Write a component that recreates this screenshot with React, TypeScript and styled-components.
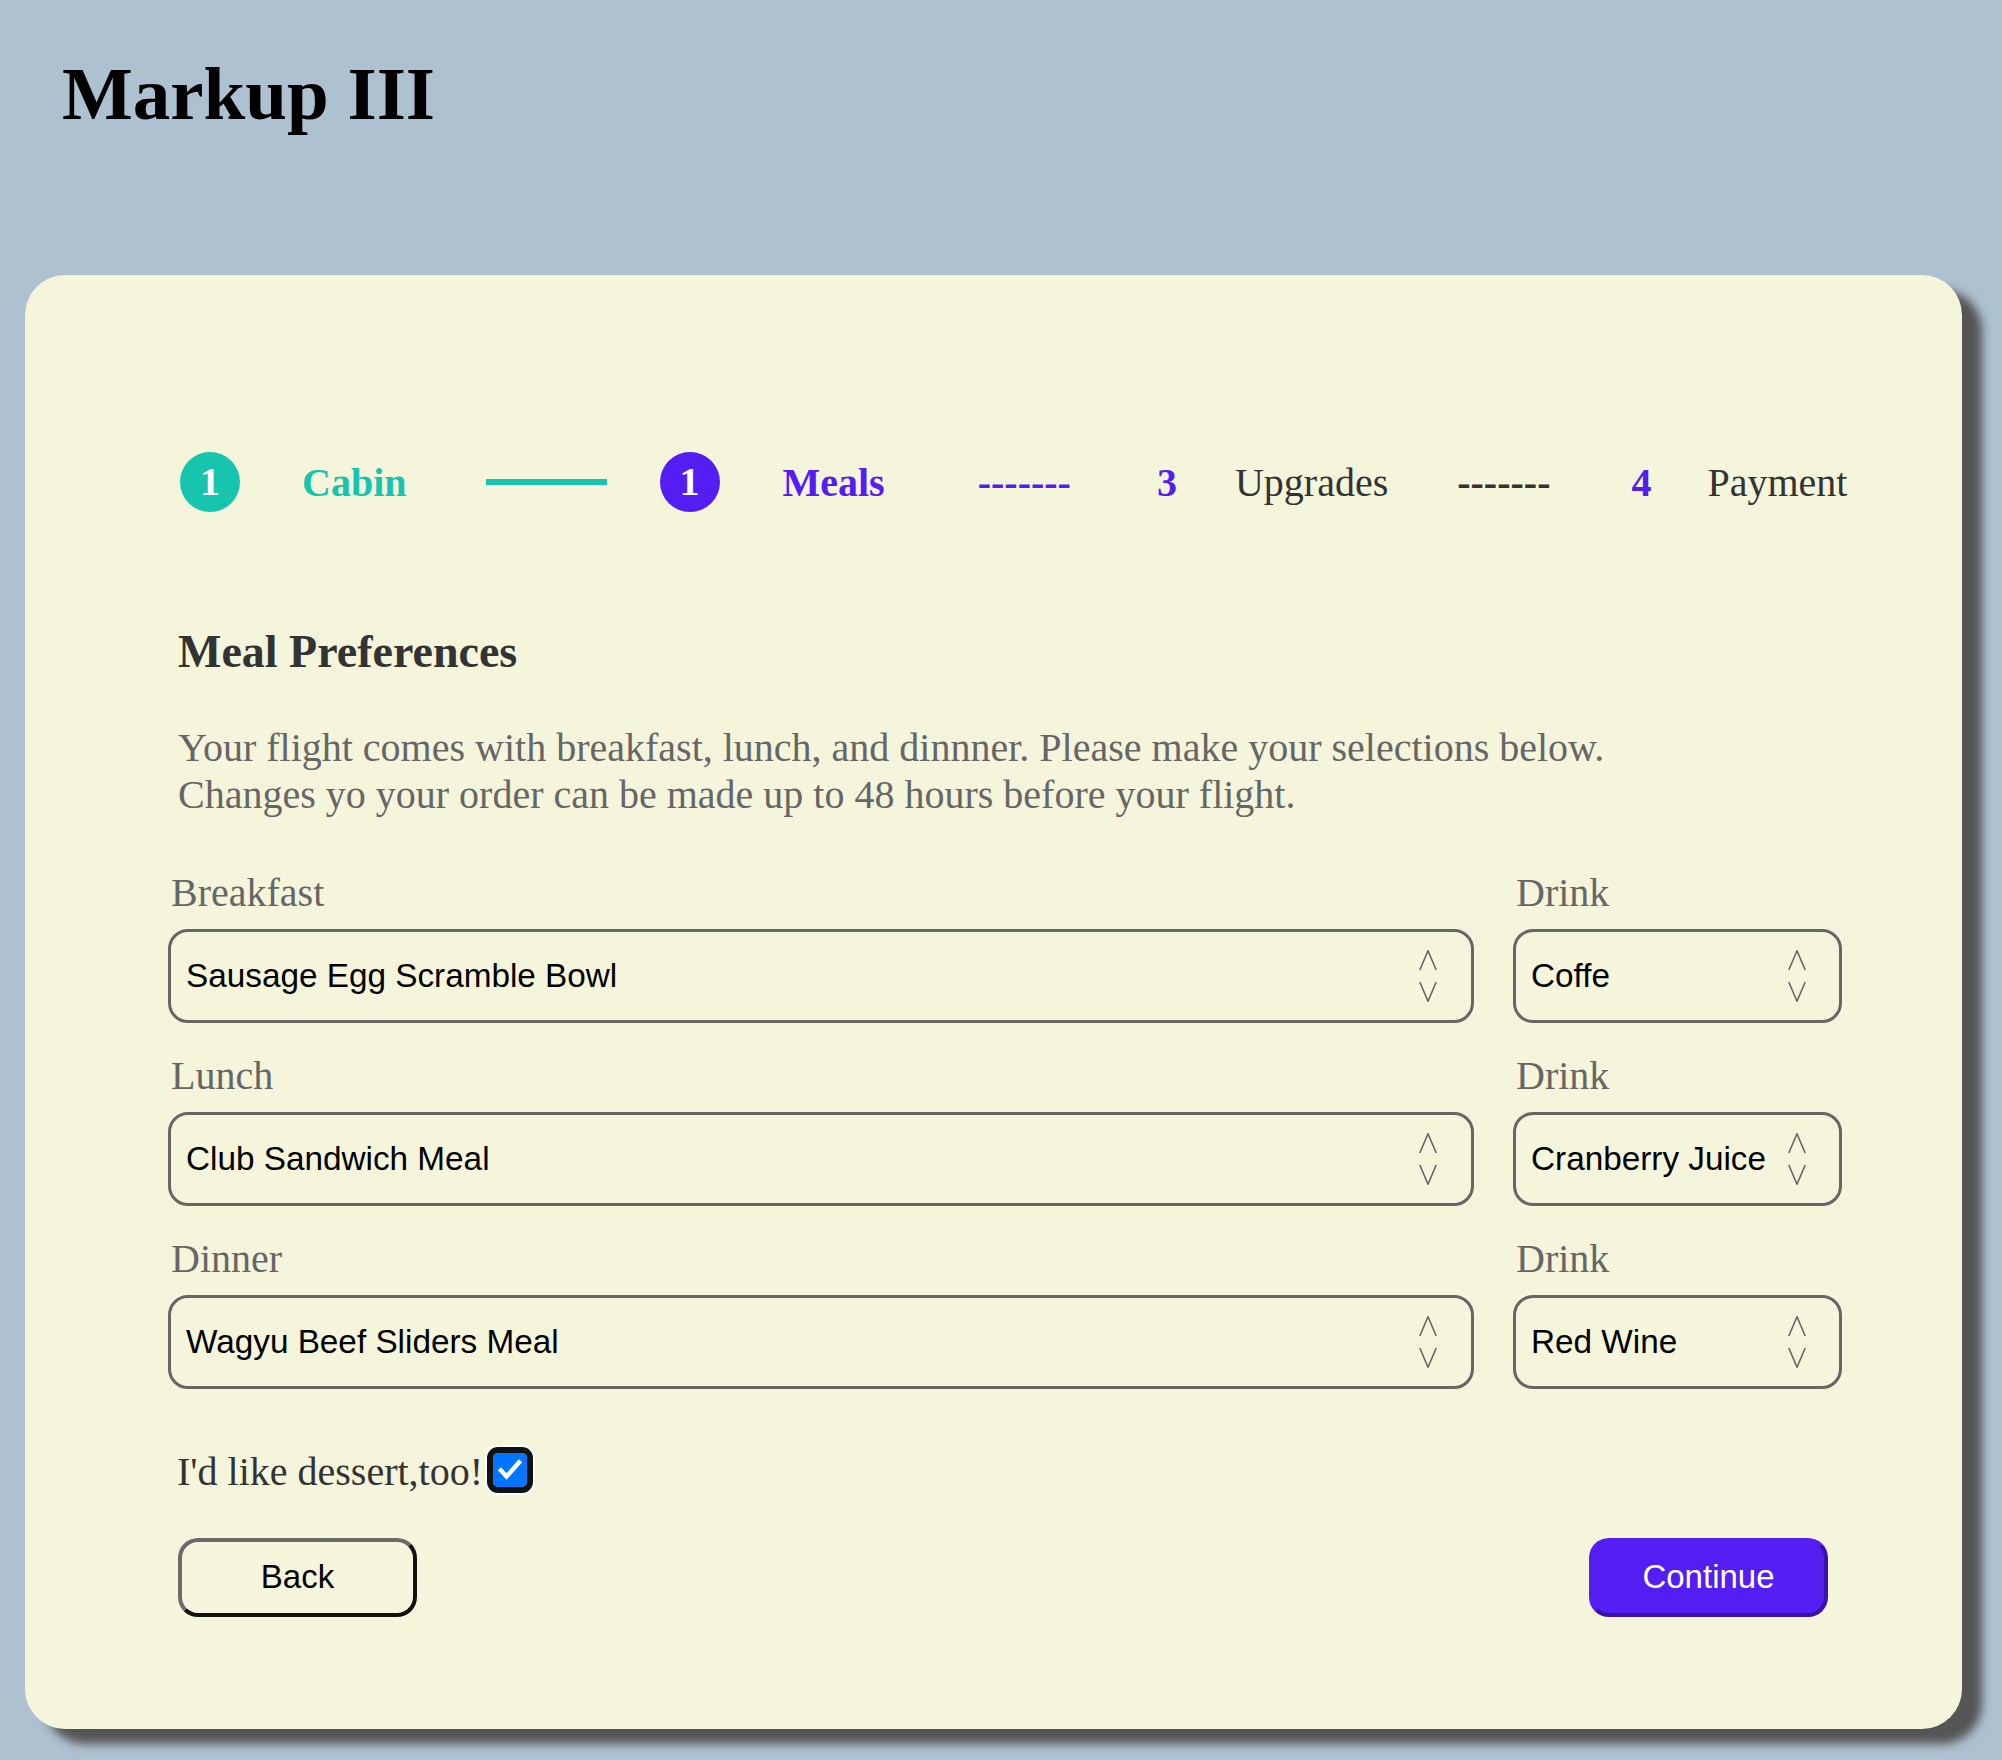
import React from "react";
import styled, { createGlobalStyle } from "styled-components";

const serif = `"Liberation Serif", "Times New Roman", Times, serif`;
const sans = `"Liberation Sans", Arial, Helvetica, sans-serif`;
const TEAL = "#17c4ae";
const PURPLE = "#541df2";
const DARK = "#333333";
const MUTED = "#666666";

const GlobalStyle = createGlobalStyle`
  html, body { margin: 0; padding: 0; }
  body { background: #aec1d1; font-family: ${serif}; }
  * { box-sizing: border-box; }
`;

const Page = styled.div`
  padding-top: 51px;
  padding-bottom: 30px;
`;

const Title = styled.h1`
  margin: 0 0 0 62px;
  font-family: ${serif};
  font-size: 75px;
  font-weight: 700;
  line-height: normal;
  color: #000;
`;

const Card = styled.main`
  margin: 138px 0 0 25px;
  width: 1937px;
  background: #f5f5dc;
  border-radius: 40px;
  box-shadow: 20px 15px 10px #555;
  padding: 177px 120px 112px 143px;
`;

const Stepper = styled.nav`
  display: flex;
  align-items: center;
  height: 60px;
  margin-left: 12px;
`;

const StepCircle = styled.span<{ $color: string; $ml?: number }>`
  flex: none;
  width: 60px;
  height: 60px;
  border-radius: 50%;
  background: ${(p) => p.$color};
  color: #fff;
  display: flex;
  align-items: center;
  justify-content: center;
  font-family: ${serif};
  font-weight: 700;
  font-size: 40px;
  line-height: 1;
  margin-left: ${(p) => p.$ml ?? 0}px;
`;

const StepText = styled.span<{ $color: string; $bold?: boolean; $ml: number }>`
  flex: none;
  font-family: ${serif};
  font-size: 40px;
  line-height: normal;
  font-weight: ${(p) => (p.$bold ? 700 : 400)};
  color: ${(p) => p.$color};
  margin-left: ${(p) => p.$ml}px;
  white-space: pre;
`;

const StepLine = styled.span<{ $ml: number }>`
  flex: none;
  width: 121px;
  height: 6px;
  background: ${TEAL};
  margin-left: ${(p) => p.$ml}px;
`;

const Heading = styled.h2`
  margin: 113px 0 0 10px;
  font-family: ${serif};
  font-size: 46px;
  font-weight: 700;
  line-height: normal;
  color: ${DARK};
`;

const Intro = styled.p`
  margin: 45.5px 0 0 10px;
  font-family: ${serif};
  font-size: 40px;
  line-height: normal;
  color: ${MUTED};
`;

const FormGrid = styled.div`
  display: grid;
  grid-template-columns: 1fr 329px;
  column-gap: 39px;
  row-gap: 29.5px;
  margin-top: 52px;
`;

const Field = styled.div`
  display: flex;
  flex-direction: column;
  gap: 13.5px;
`;

const Label = styled.label`
  margin-left: 3px;
  font-family: ${serif};
  font-size: 40px;
  line-height: 46px;
  color: ${MUTED};
`;

const SelectBox = styled.div<{ $pr: number }>`
  height: 94px;
  border: 3px solid ${MUTED};
  border-radius: 20px;
  display: flex;
  align-items: center;
  justify-content: space-between;
  padding: 0 ${(p) => p.$pr}px 0 15px;
  font-family: ${sans};
  font-size: 33.3px;
  color: #000;
  white-space: nowrap;
`;

const Chevrons = () => (
  <svg width="18" height="52" viewBox="0 0 18 52" fill="none" stroke="#666" strokeWidth="1.6">
    <polyline points="0.8,20 9,0.8 17.2,20" />
    <polyline points="0.8,32 9,51.2 17.2,32" />
  </svg>
);

const CheckRow = styled.div`
  display: flex;
  align-items: center;
  margin: 60px 0 0 9px;
`;

const CheckLabel = styled.span`
  font-family: ${serif};
  font-size: 40px;
  line-height: 46px;
  color: ${DARK};
`;

const CheckBox = styled.span`
  flex: none;
  width: 34px;
  height: 34px;
  margin: 0 0 4px 10px;
  border-radius: 5px;
  background: #0075ff;
  outline: 6px solid #121212;
  outline-offset: 0;
  box-shadow: 0 0 0 8px #ffffff;
  display: flex;
  align-items: center;
  justify-content: center;
`;

const ButtonRow = styled.div`
  display: flex;
  justify-content: space-between;
  margin: 42.5px 14px 0 10px;
`;

const Button = styled.button<{ $primary?: boolean }>`
  width: 239px;
  height: 79px;
  border-radius: 20px;
  border: 4px solid;
  border-color: ${(p) =>
    p.$primary
      ? `${PURPLE} #3a12a8 #3a12a8 ${PURPLE}`
      : `#6a6a6a #111111 #111111 #6a6a6a`};
  background: ${(p) => (p.$primary ? PURPLE : "transparent")};
  color: ${(p) => (p.$primary ? "#ffffff" : "#000000")};
  font-family: ${sans};
  font-size: 33px;
  padding: 0;
  cursor: pointer;
`;

const rows = [
  { label: "Breakfast", meal: "Sausage Egg Scramble Bowl", drink: "Coffe" },
  { label: "Lunch", meal: "Club Sandwich Meal", drink: "Cranberry Juice" },
  { label: "Dinner", meal: "Wagyu Beef Sliders Meal", drink: "Red Wine" },
];

export default function App() {
  return (
    <>
      <GlobalStyle />
      <Page>
        <Title>Markup III</Title>
        <Card>
          <Stepper>
            <StepCircle $color={TEAL}>1</StepCircle>
            <StepText $color={TEAL} $bold $ml={62}>Cabin</StepText>
            <StepLine $ml={79} />
            <StepCircle $color={PURPLE} $ml={53}>1</StepCircle>
            <StepText $color={PURPLE} $bold $ml={63}>Meals</StepText>
            <StepText $color={PURPLE} $bold $ml={93}>-------</StepText>
            <StepText $color={PURPLE} $bold $ml={86}>3</StepText>
            <StepText $color={DARK} $ml={58}>Upgrades</StepText>
            <StepText $color={DARK} $bold $ml={69}>-------</StepText>
            <StepText $color={PURPLE} $bold $ml={81}>4</StepText>
            <StepText $color={DARK} $ml={56}>Payment</StepText>
          </Stepper>

          <Heading>Meal Preferences</Heading>
          <Intro>
            Your flight comes with breakfast, lunch, and dinnner. Please make your selections below.
            <br />
            Changes yo your order can be made up to 48 hours before your flight.
          </Intro>

          <FormGrid>
            {rows.map((r) => (
              <React.Fragment key={r.label}>
                <Field>
                  <Label>{r.label}</Label>
                  <SelectBox $pr={34}>
                    <span>{r.meal}</span>
                    <Chevrons />
                  </SelectBox>
                </Field>
                <Field>
                  <Label>Drink</Label>
                  <SelectBox $pr={33}>
                    <span>{r.drink}</span>
                    <Chevrons />
                  </SelectBox>
                </Field>
              </React.Fragment>
            ))}
          </FormGrid>

          <CheckRow>
            <CheckLabel>I'd like dessert,too!</CheckLabel>
            <CheckBox>
              <svg width="34" height="34" viewBox="0 0 34 34" fill="none" stroke="#fff" strokeWidth="4.5" strokeLinecap="square" strokeLinejoin="miter">
                <polyline points="8,17.5 13.5,23.5 26,9.5" />
              </svg>
            </CheckBox>
          </CheckRow>

          <ButtonRow>
            <Button>Back</Button>
            <Button $primary>Continue</Button>
          </ButtonRow>
        </Card>
      </Page>
    </>
  );
}
